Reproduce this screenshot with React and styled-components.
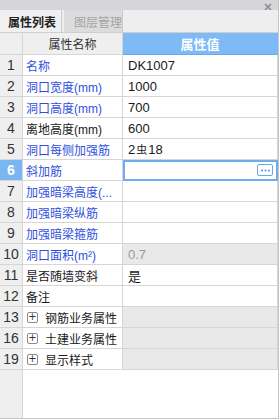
import styled, { createGlobalStyle } from "styled-components";

const GlobalStyle = createGlobalStyle`
  html, body {
    margin: 0;
    padding: 0;
    background: #ffffff;
  }
  body {
    font-family: "Liberation Sans", "Noto Sans CJK SC", sans-serif;
    font-size: 12px;
  }
`;

const rows = [
  { no: "1", name: "名称", value: "DK1007", blue: true },
  { no: "2", name: "洞口宽度(mm)", value: "1000", blue: true },
  { no: "3", name: "洞口高度(mm)", value: "700", blue: true },
  { no: "4", name: "离地高度(mm)", value: "600" },
  { no: "5", name: "洞口每侧加强筋", value: "rebar", blue: true },
  { no: "6", name: "斜加筋", value: "", blue: true, selected: true },
  { no: "7", name: "加强暗梁高度(...", value: "", blue: true },
  { no: "8", name: "加强暗梁纵筋", value: "", blue: true },
  { no: "9", name: "加强暗梁箍筋", value: "", blue: true },
  { no: "10", name: "洞口面积(m²)", value: "0.7", blue: true, readonly: true },
  { no: "11", name: "是否随墙变斜", value: "是" },
  { no: "12", name: "备注", value: "" },
  { no: "13", name: "钢筋业务属性", group: true },
  { no: "16", name: "土建业务属性", group: true },
  { no: "19", name: "显示样式", group: true },
];

const App = () => {
  return (
    <>
      <GlobalStyle />
      <Panel>
        <TitleBar>
          <CloseIcon width="8" height="8" viewBox="0 0 8 8">
            <path d="M1 1 L7 7 M7 1 L1 7" stroke="#8a8a8a" strokeWidth="1.6" />
          </CloseIcon>
        </TitleBar>
        <TabBar>
          <Tab $active>属性列表</Tab>
          <Tab>图层管理</Tab>
        </TabBar>
        <Grid>
          <HeadCell />
          <HeadCell>属性名称</HeadCell>
          <HeadCell $blue>属性值</HeadCell>
          {rows.map((row) => (
            <Row key={row.no} row={row} />
          ))}
          <NoCell $filler />
          <FillCell />
        </Grid>
      </Panel>
    </>
  );
};

const Row = ({ row }) => {
  return (
    <>
      <NoCell $selected={row.selected}>{row.no}</NoCell>
      <NameCell $blue={row.blue}>
        {row.group && <PlusBox>+</PlusBox>}
        {row.name}
      </NameCell>
      <ValueCell
        $gray={row.group || row.readonly}
        $muted={row.readonly}
        $selected={row.selected}
      >
        {row.value === "rebar" ? (
          <>
            2<Rebar>虫</Rebar>18
          </>
        ) : (
          row.value
        )}
        {row.selected && (
          <DotsButton>
            <svg width="11" height="3" viewBox="0 0 11 3">
              <circle cx="2" cy="1.5" r="1" fill="#4a90e2" />
              <circle cx="5.5" cy="1.5" r="1" fill="#4a90e2" />
              <circle cx="9" cy="1.5" r="1" fill="#4a90e2" />
            </svg>
          </DotsButton>
        )}
      </ValueCell>
    </>
  );
};

const Panel = styled.div`
  width: 279px;
  height: 419px;
  box-sizing: border-box;
  border-right: 1px solid #c4c4c4;
  border-bottom: 1px solid #c4c4c4;
  display: flex;
  flex-direction: column;
  background: #ffffff;
  overflow: hidden;
`;

const TitleBar = styled.div`
  height: 10px;
  background: #d6d6da;
  display: flex;
  align-items: center;
  justify-content: flex-end;
  padding-right: 6px;
`;

const CloseIcon = styled.svg`
  display: block;
  margin-top: 3px;
`;

const TabBar = styled.div`
  height: 23px;
  box-sizing: border-box;
  background: #eeeeee;
  border-bottom: 1px solid #cfcfcf;
  display: flex;
  align-items: stretch;
`;

const Tab = styled.div`
  width: ${(p) => (p.$active ? "62px" : "59px")};
  padding-left: ${(p) => (p.$active ? "8px" : "10px")};
  box-sizing: border-box;
  display: flex;
  align-items: center;
  font-size: 12px;
  font-weight: ${(p) => (p.$active ? 700 : 400)};
  color: ${(p) => (p.$active ? "#222222" : "#a4a4a4")};
  background: ${(p) => (p.$active ? "#f0f0f0" : "#dcdcdc")};
  border-right: 1px solid #cccccc;
  margin-right: ${(p) => (p.$active ? "2px" : "0")};
`;

const Grid = styled.div`
  flex: 1;
  display: grid;
  grid-template-columns: 23px 100px 1fr;
  grid-template-rows: 22px repeat(15, 21px) 1fr;
`;

const Cell = styled.div`
  box-sizing: border-box;
  border-right: 1px solid #d6d6d6;
  border-bottom: 1px solid #d6d6d6;
  display: flex;
  align-items: center;
  white-space: nowrap;
  overflow: hidden;
  position: relative;
`;

const HeadCell = styled(Cell)`
  justify-content: center;
  background: ${(p) => (p.$blue ? "#7dbaf6" : "#efefef")};
  color: ${(p) => (p.$blue ? "#ffffff" : "#333333")};
  font-weight: ${(p) => (p.$blue ? 700 : 400)};
  font-size: ${(p) => (p.$blue ? "13px" : "12px")};
  border-bottom-color: ${(p) => (p.$blue ? "#6aa8ea" : "#d6d6d6")};
  border-right-color: ${(p) => (p.$blue ? "transparent" : "#d6d6d6")};
`;

const NoCell = styled(Cell)`
  justify-content: center;
  font-size: 14px;
  background: ${(p) => (p.$selected ? "#7ab6f2" : "#efefef")};
  color: ${(p) => (p.$selected ? "#ffffff" : "#333333")};
  font-weight: ${(p) => (p.$selected ? 700 : 400)};
  border-bottom: ${(p) => (p.$filler ? "none" : "1px solid #d6d6d6")};
`;

const NameCell = styled(Cell)`
  padding-left: 3px;
  color: ${(p) => (p.$blue ? "#2f4fe0" : "#1a1a1a")};
`;

const ValueCell = styled(Cell)`
  padding-left: ${(p) => (p.$selected ? "4px" : "5px")};
  font-size: 13px;
  background: ${(p) => (p.$gray ? "#e9e9e9" : "#ffffff")};
  color: ${(p) => (p.$muted ? "#9a9a9a" : "#1a1a1a")};
  border: ${(p) => (p.$selected ? "2px solid #6eacee" : "none")};
  border-bottom: ${(p) =>
    p.$selected ? "2px solid #6eacee" : "1px solid #d6d6d6"};
  border-right: ${(p) =>
    p.$selected ? "2px solid #6eacee" : "1px solid #d6d6d6"};
`;

const FillCell = styled.div`
  grid-column: 2 / 4;
  background: #ffffff;
`;

const PlusBox = styled.span`
  width: 9px;
  height: 9px;
  border: 1px solid #8a8a8a;
  border-radius: 2px;
  display: inline-flex;
  align-items: center;
  justify-content: center;
  font-size: 10px;
  line-height: 1;
  color: #333333;
  margin: 0 7px 0 1px;
  font-family: "DejaVu Sans", sans-serif;
`;

const Rebar = styled.span`
  font-size: 11px;
  margin: 0 1px;
`;

const DotsButton = styled.span`
  position: absolute;
  right: 3px;
  top: 2px;
  width: 14px;
  height: 10px;
  border: 1px solid #6aa6e8;
  border-radius: 2px;
  display: flex;
  align-items: center;
  justify-content: center;
  background: #ffffff;

  svg {
    display: block;
  }
`;

export default App;
